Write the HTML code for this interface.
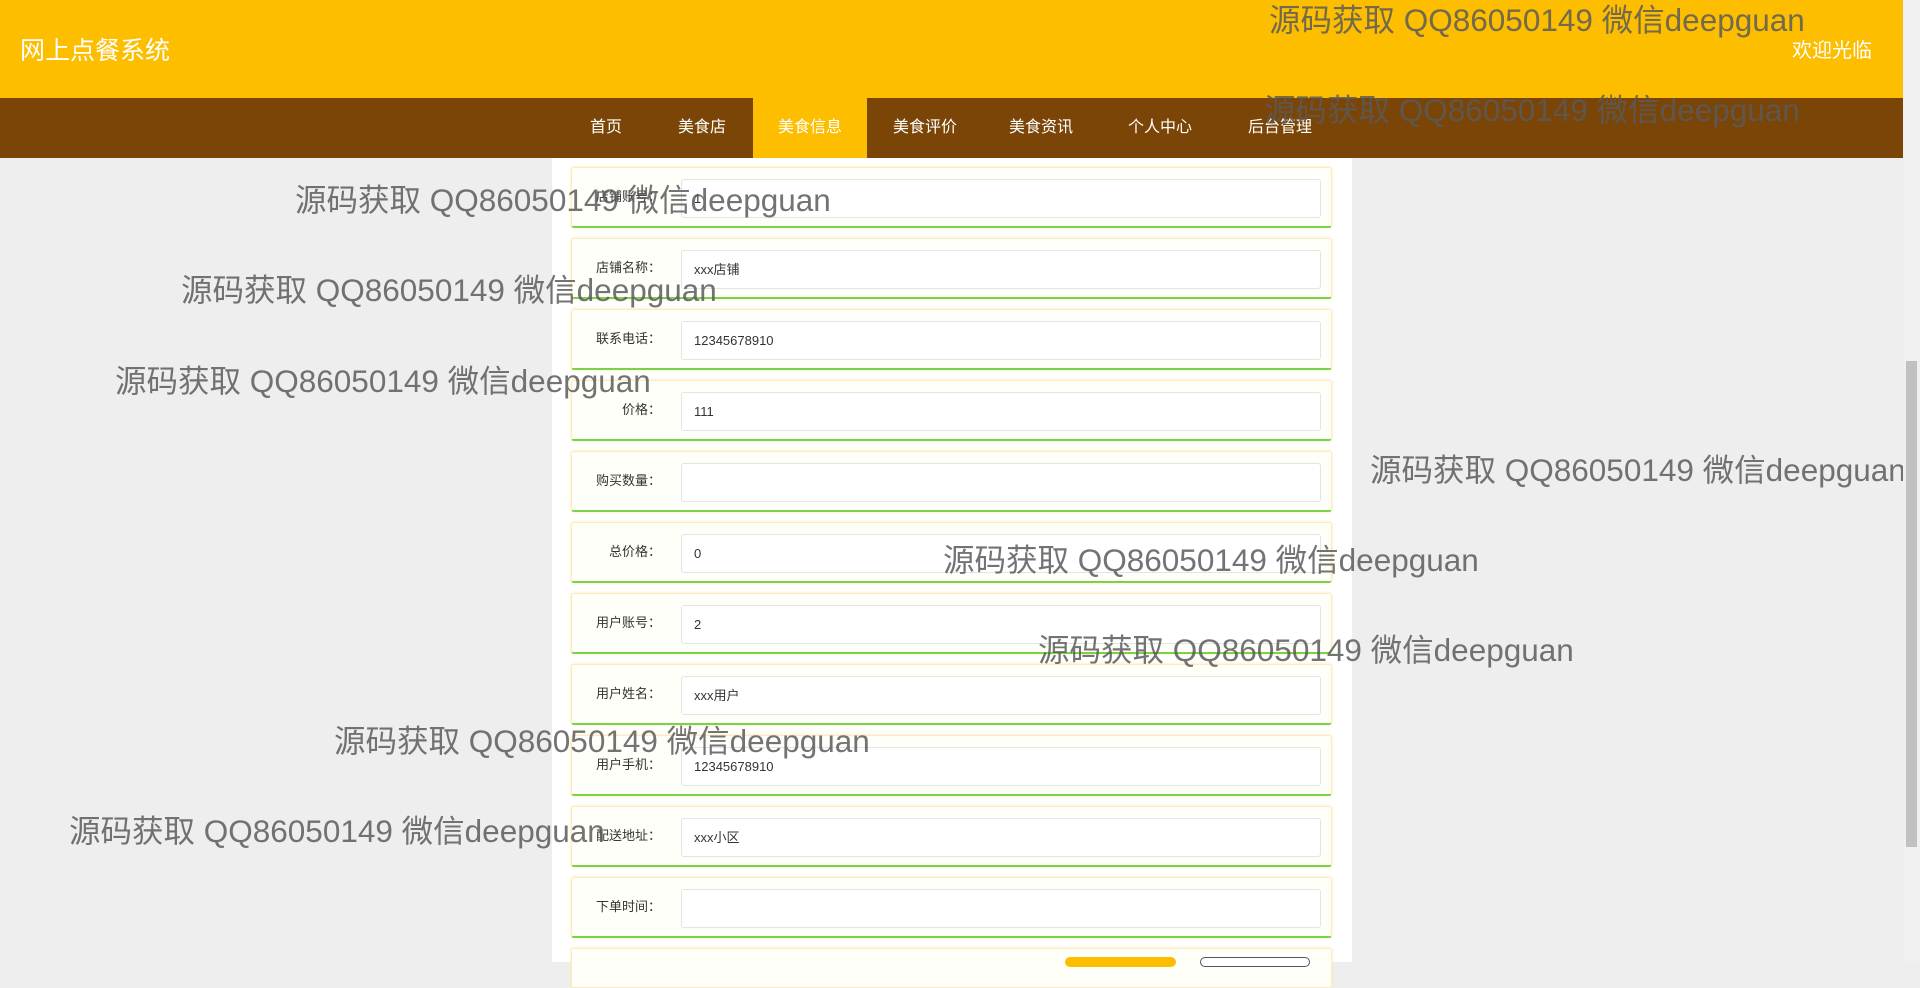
<!DOCTYPE html>
<html><head><meta charset="utf-8"><style>
*{margin:0;padding:0;box-sizing:border-box}
body{width:1920px;height:962px;overflow:hidden;background:#eeeeee;font-family:"Liberation Sans","Noto Sans CJK SC",sans-serif;position:relative}
.hdr{position:absolute;left:0;top:0;width:1903px;height:98px;background:#fdbe00}
.title{position:absolute;left:20px;top:31px;color:#fff;font-size:25px}
.wel{position:absolute;left:1792px;top:34px;color:#fff;font-size:20px}
.nav{position:absolute;left:0;top:98px;width:1903px;height:60px;background:#7a4506}
.nav span{position:absolute;top:0;height:60px;line-height:60px;color:#fff;font-size:16px;transform:translateX(-50%)}
.nav .act{background:#fdbe00;width:114px;text-align:center}
.panel{position:absolute;left:552px;top:158px;width:800px;height:804px;background:#fff}
.row{position:absolute;left:571px;width:761px;height:61px;border:1px solid #fbecc0;border-bottom:2px solid #7ad14a;border-radius:3px;background:#fffffa;box-shadow:0 0 3px #fbe9b0}
.row label{position:absolute;right:670px;top:0;line-height:58px;font-size:13px;color:#333;white-space:nowrap}
.row .in{position:absolute;left:109px;top:11px;width:640px;height:39px;border:1px solid #e4e4e4;border-radius:3px;background:#fff;font-size:13px;color:#333;line-height:37px;padding-left:12px}
.wm{position:absolute;font-size:31.5px;color:rgba(90,90,90,.85);white-space:nowrap;line-height:1}
.sb{position:absolute;left:1903px;top:0;width:17px;height:962px;background:#f0f0f0}
.thumb{position:absolute;left:1906px;top:361px;width:11px;height:486px;background:#c1c1c1}
.b1{position:absolute;left:1065px;top:957px;width:111px;height:10px;background:#fdbe00;border-radius:6px}
.b2{position:absolute;left:1200px;top:957px;width:110px;height:10px;border:1px solid #555;border-radius:6px;background:#fff}
</style></head><body>
<div class="hdr"><div class="title">网上点餐系统</div><div class="wel">欢迎光临</div></div>
<div class="nav">
<span style="left:606px">首页</span><span style="left:702px">美食店</span>
<span class="act" style="left:810px">美食信息</span><span style="left:925px">美食评价</span>
<span style="left:1041px">美食资讯</span><span style="left:1160px">个人中心</span><span style="left:1280px">后台管理</span>
</div>
<div class="panel"></div>
<div class="row" style="top:167px"><label>店铺账号：</label><div class="in">1</div></div>
<div class="row" style="top:238px"><label>店铺名称：</label><div class="in">xxx店铺</div></div>
<div class="row" style="top:309px"><label>联系电话：</label><div class="in">12345678910</div></div>
<div class="row" style="top:380px"><label>价格：</label><div class="in">111</div></div>
<div class="row" style="top:451px"><label>购买数量：</label><div class="in"></div></div>
<div class="row" style="top:522px"><label>总价格：</label><div class="in">0</div></div>
<div class="row" style="top:593px"><label>用户账号：</label><div class="in">2</div></div>
<div class="row" style="top:664px"><label>用户姓名：</label><div class="in">xxx用户</div></div>
<div class="row" style="top:735px"><label>用户手机：</label><div class="in">12345678910</div></div>
<div class="row" style="top:806px"><label>配送地址：</label><div class="in">xxx小区</div></div>
<div class="row" style="top:877px"><label>下单时间：</label><div class="in"></div></div>
<div class="row" style="top:948px;height:40px;border-bottom:1px solid #fbecc0"></div>
<div class="b1"></div><div class="b2"></div>
<div class="wm" style="left:1269px;top:5px">源码获取 QQ86050149 微信deepguan</div>
<div class="wm" style="left:1264px;top:95px">源码获取 QQ86050149 微信deepguan</div>
<div class="wm" style="left:295px;top:185px">源码获取 QQ86050149 微信deepguan</div>
<div class="wm" style="left:181px;top:275px">源码获取 QQ86050149 微信deepguan</div>
<div class="wm" style="left:115px;top:366px">源码获取 QQ86050149 微信deepguan</div>
<div class="wm" style="left:1370px;top:455px">源码获取 QQ86050149 微信deepguan</div>
<div class="wm" style="left:943px;top:545px">源码获取 QQ86050149 微信deepguan</div>
<div class="wm" style="left:1038px;top:635px">源码获取 QQ86050149 微信deepguan</div>
<div class="wm" style="left:334px;top:726px">源码获取 QQ86050149 微信deepguan</div>
<div class="wm" style="left:69px;top:816px">源码获取 QQ86050149 微信deepguan</div>
<div class="sb"></div><div class="thumb"></div>
</body></html>
